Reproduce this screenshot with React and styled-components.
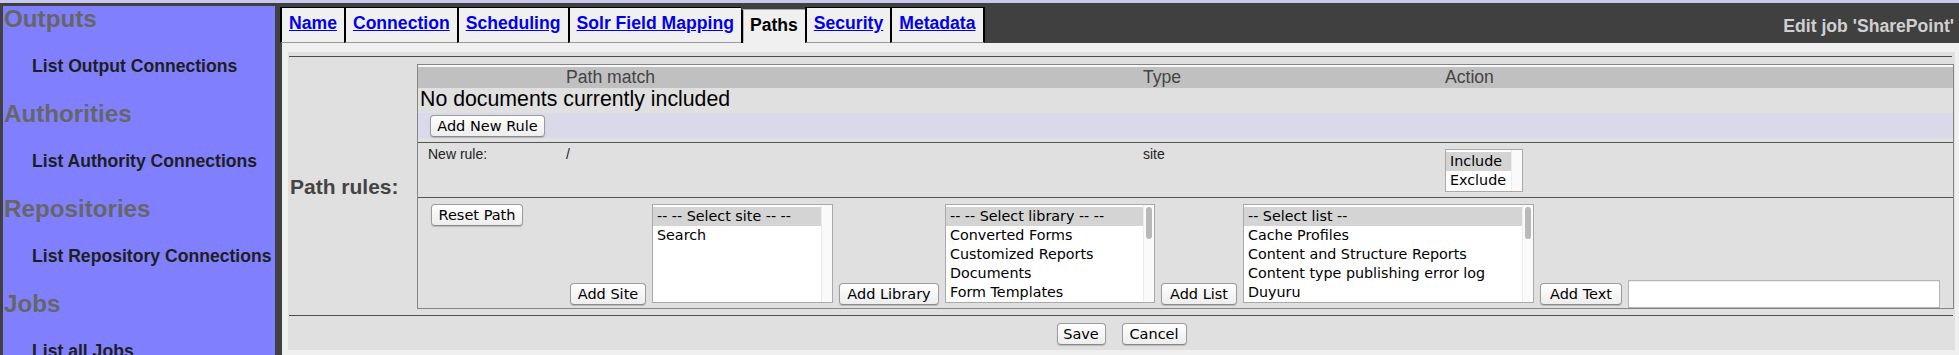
import React from "react";
import styled, { createGlobalStyle } from "styled-components";

const GlobalStyle = createGlobalStyle`
  html, body {
    margin: 0;
    padding: 0;
    overflow: hidden;
    background: #404040;
  }
  * {
    box-sizing: border-box;
  }
`;

const Page = styled.div`
  display: grid;
  grid-template-columns: 272px 1fr;
  column-gap: 5px;
  height: 355px;
  padding-left: 3px;
  border-top: 3px solid #c8c8f0;
  background: #404040;
  font-family: "Liberation Sans", Arial, sans-serif;
`;

const Sidebar = styled.nav`
  margin-top: 3px;
  padding-left: 1px;
  background: #8080ff;
  overflow: hidden;
`;

const SectionTitle = styled.div`
  font-size: 24.2px;
  font-weight: bold;
  line-height: 25px;
  color: #666666;
  margin-bottom: 24px;
`;

const SideLink = styled.div`
  font-size: 17.6px;
  font-weight: bold;
  line-height: 22px;
  color: #1e1e1e;
  padding-left: 28px;
  margin-bottom: 24px;
  white-space: nowrap;
`;

const Main = styled.div`
  display: flex;
  flex-direction: column;
  min-width: 0;
`;

const TabBand = styled.div`
  display: flex;
  align-items: flex-end;
  height: 40px;
  padding-top: 4px;
  background: #404040;
`;

const Tab = styled.div`
  height: ${(p) => (p.$active ? "34px" : "36px")};
  padding: 5px 7px 0;
  background: #f0f0f0;
  border-top: 1px solid ${(p) => (p.$active ? "#a8a8a8" : "#000")};
  border-left: 2px solid #000;
  border-right: ${(p) => (p.$last ? "2px solid #000" : "none")};
  border-bottom: ${(p) => (p.$active ? "none" : "1px solid #9a9a9a")};
  box-shadow: ${(p) => (p.$active ? "inset 1px 0 0 #b8b8b8" : "none")};
  font-size: 17.6px;
  font-weight: bold;
  line-height: 20px;
  white-space: nowrap;
  color: ${(p) => (p.$active ? "#000" : "#0000ee")};
  text-decoration: ${(p) => (p.$active ? "none" : "underline")};
  cursor: pointer;
`;

const JobTitle = styled.div`
  margin-left: auto;
  align-self: flex-start;
  margin-top: 9px;
  padding-right: 5px;
  font-size: 17.6px;
  font-weight: bold;
  line-height: 20px;
  color: #d0d0d0;
  white-space: nowrap;
`;

const Content = styled.div`
  flex: 1;
  background: #f0f0f0;
  border-left: 2px solid #404040;
  padding: 9px 4px 5px 6px;
`;

const Panel = styled.div`
  height: 100%;
  background: #e0e0e0;
  padding: 4px 0 5px;
`;

const Rule = styled.div`
  height: 1px;
  margin: ${(p) => p.$margin};
  background: #4c4c4c;
`;

const FieldRow = styled.div`
  display: grid;
  grid-template-columns: 129px 1fr;
  align-items: center;
  margin: 7px 1px 0 0;
`;

const FieldLabel = styled.div`
  padding-left: 2px;
  font-size: 21px;
  font-weight: bold;
  line-height: 24px;
  color: #444444;
  white-space: nowrap;
`;

const FormTable = styled.div`
  height: 245px;
  border: 1px solid #858585;
  padding-top: 2px;
  background: #e0e0e0;
  box-shadow: inset 0 2px 0 #f6f6f6;
`;

const Columns = styled.div`
  display: grid;
  grid-template-columns: 146px 577px 302px 1fr;
`;

const HeaderRow = styled(Columns)`
  height: 21px;
  background: #c0c0c0;
  font-size: 17.6px;
  line-height: 21px;
  color: #444444;
`;

const Cell = styled.div`
  padding-left: ${(p) => p.$pad || 2}px;
  white-space: nowrap;
`;

const EmptyRow = styled.div`
  height: 25px;
  padding-left: 2px;
  font-size: 21.3px;
  line-height: 23px;
  color: #000;
  background: #e0e0e0;
`;

const AddRow = styled.div`
  height: 25px;
  display: flex;
  align-items: center;
  padding-left: 12px;
  margin-bottom: 4px;
  background: #d9d9e9;
`;

const NewRuleRow = styled(Columns)`
  height: 55px;
  border-top: 1px solid #555555;
  padding-top: 3px;
  align-items: start;
  font-size: 14px;
  line-height: 16px;
  color: #222222;
`;

const BuilderRow = styled.div`
  display: flex;
  align-items: flex-end;
  height: 111px;
  border-top: 1px solid #555555;
  padding-top: 6px;
`;

const ResetCell = styled.div`
  width: 146px;
  flex: none;
  align-self: flex-start;
  padding-left: 13px;
`;

const Picker = styled.div`
  display: flex;
  align-items: flex-end;
  gap: 6px;
  padding-left: 6px;
`;

const Button = styled.button`
  flex: none;
  width: ${(p) => p.$w}px;
  height: 22px;
  margin-bottom: ${(p) => p.$mb || 0}px;
  padding: 0;
  border: 1px solid #9c9c9c;
  border-bottom-color: #8a8a8a;
  border-radius: 4px;
  background: linear-gradient(#ffffff, #ededed);
  box-shadow: 0 1px 1px rgba(0, 0, 0, 0.18);
  font-family: "DejaVu Sans", "Lucida Grande", sans-serif;
  font-size: 14.5px;
  line-height: 20px;
  text-align: center;
  color: #000;
  white-space: nowrap;
  cursor: pointer;
`;

const ListBox = styled.div`
  display: flex;
  flex: none;
  width: ${(p) => p.$w}px;
  height: ${(p) => p.$h}px;
  margin-top: ${(p) => p.$mt || 0}px;
  margin-bottom: ${(p) => p.$mb || 0}px;
  border: 1px solid #a9a9a9;
  background: #ffffff;
  overflow: hidden;
`;

const Options = styled.div`
  flex: 1;
  min-width: 0;
  padding-top: 2px;
`;

const Option = styled.div`
  height: 19px;
  padding-left: 4px;
  font-family: "DejaVu Sans", "Lucida Grande", sans-serif;
  font-size: 14.3px;
  line-height: 18px;
  color: #000;
  white-space: nowrap;
  background: ${(p) => (p.$selected ? "#d4d4d4" : "transparent")};
`;

const Gutter = styled.div`
  width: 11px;
  flex: none;
  padding-top: 2px;
  border-left: 1px solid #ebebeb;
  background: #fafafa;
`;

const Thumb = styled.div`
  width: 6px;
  height: 32px;
  margin: 0 auto;
  border-radius: 3px;
  background: #b9b9b9;
`;

const TextInput = styled.input`
  width: 312px;
  height: 28px;
  flex: none;
  border: 1px solid #b4b4b4;
  background: #fff;
  box-shadow: inset 0 1px 1px rgba(0, 0, 0, 0.08);
  outline: none;
`;

const Actions = styled.div`
  display: flex;
  justify-content: center;
  gap: 16px;
  margin-top: 7px;
`;

const sections = [
  ["Outputs", "List Output Connections"],
  ["Authorities", "List Authority Connections"],
  ["Repositories", "List Repository Connections"],
  ["Jobs", "List all Jobs"],
];

const tabs = ["Name", "Connection", "Scheduling", "Solr Field Mapping", "Paths", "Security", "Metadata"];

function Select({ items, w, h, scroll, mt, mb }) {
  return (
    <ListBox $w={w} $h={h} $mt={mt} $mb={mb}>
      <Options>
        {items.map((item, i) => (
          <Option key={item} $selected={i === 0}>
            {item}
          </Option>
        ))}
      </Options>
      <Gutter>{scroll && <Thumb />}</Gutter>
    </ListBox>
  );
}

export default function App() {
  return (
    <>
      <GlobalStyle />
      <Page>
        <Sidebar>
          {sections.map(([title, link]) => (
            <React.Fragment key={title}>
              <SectionTitle>{title}</SectionTitle>
              <SideLink>{link}</SideLink>
            </React.Fragment>
          ))}
        </Sidebar>
        <Main>
          <TabBand>
            {tabs.map((t, i) => (
              <Tab key={t} $active={t === "Paths"} $last={i === tabs.length - 1}>
                {t}
              </Tab>
            ))}
            <JobTitle>Edit job 'SharePoint'</JobTitle>
          </TabBand>
          <Content>
            <Panel>
              <Rule $margin="0 3px 0 1px" />
              <FieldRow>
                <FieldLabel>Path rules:</FieldLabel>
                <FormTable>
                  <HeaderRow>
                    <Cell />
                    <Cell>Path match</Cell>
                    <Cell>Type</Cell>
                    <Cell>Action</Cell>
                  </HeaderRow>
                  <EmptyRow>No documents currently included</EmptyRow>
                  <AddRow>
                    <Button $w={115}>Add New Rule</Button>
                  </AddRow>
                  <NewRuleRow>
                    <Cell $pad={10}>New rule:</Cell>
                    <Cell>/</Cell>
                    <Cell>site</Cell>
                    <Cell>
                      <Select items={["Include", "Exclude"]} w={78} h={43} mt={3} />
                    </Cell>
                  </NewRuleRow>
                  <BuilderRow>
                    <ResetCell>
                      <Button $w={92}>Reset Path</Button>
                    </ResetCell>
                    <Picker>
                      <Button $w={76} $mb={3}>Add Site</Button>
                      <Select items={["-- -- Select site -- --", "Search"]} w={181} h={99} mb={5} />
                      <Button $w={100} $mb={3}>Add Library</Button>
                      <Select
                        items={[
                          "-- -- Select library -- --",
                          "Converted Forms",
                          "Customized Reports",
                          "Documents",
                          "Form Templates",
                        ]}
                        w={210}
                        h={99}
                        mb={5}
                        scroll
                      />
                      <Button $w={76} $mb={3}>Add List</Button>
                      <Select
                        items={[
                          "-- Select list --",
                          "Cache Profiles",
                          "Content and Structure Reports",
                          "Content type publishing error log",
                          "Duyuru",
                        ]}
                        w={291}
                        h={99}
                        mb={5}
                        scroll
                      />
                      <Button $w={82} $mb={3}>Add Text</Button>
                      <TextInput type="text" />
                    </Picker>
                  </BuilderRow>
                </FormTable>
              </FieldRow>
              <Rule $margin="6px 2px 0 1px" />
              <Actions>
                <Button $w={49}>Save</Button>
                <Button $w={65}>Cancel</Button>
              </Actions>
            </Panel>
          </Content>
        </Main>
      </Page>
    </>
  );
}
